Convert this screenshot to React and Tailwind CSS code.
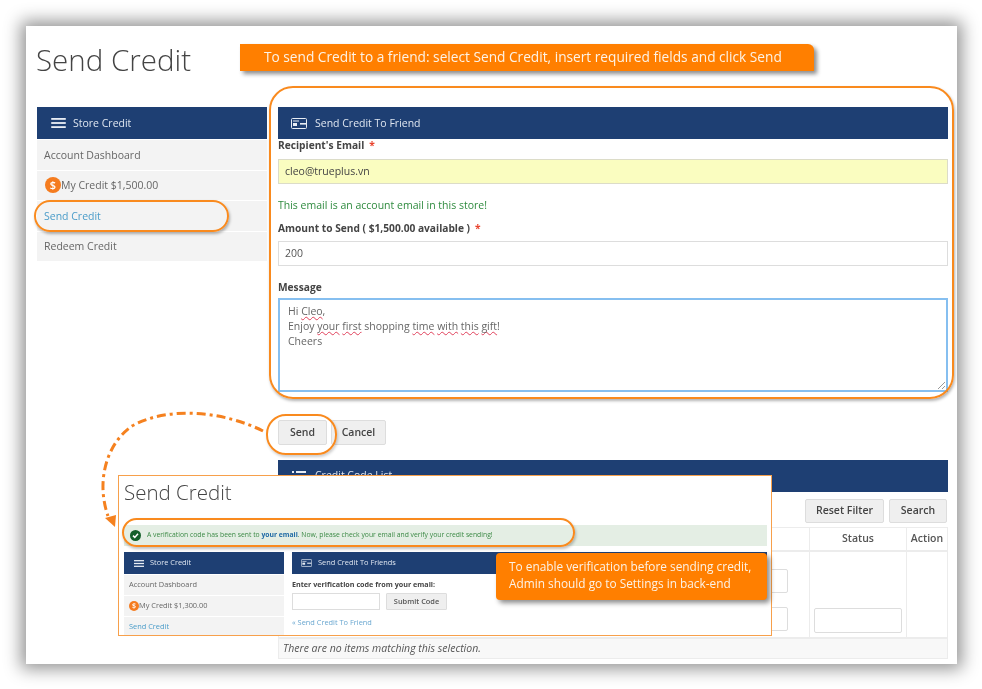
import React from "react";

const orange = "border-[#f98a1e]";

const MenuIcon = ({ className }) => (
  <svg className={className} viewBox="0 0 16 11" fill="#e8edf4">
    <rect x="0" y="0" width="16" height="2" />
    <rect x="0" y="4.5" width="16" height="2" />
    <rect x="0" y="9" width="16" height="2" />
  </svg>
);

const CardIcon = ({ className }) => (
  <svg className={className} viewBox="0 0 16 11" fill="none">
    <rect x="0.5" y="0.5" width="15" height="10" rx="1" stroke="#e8edf4" />
    <rect x="2" y="2.5" width="6" height="1" fill="#e8edf4" />
    <rect x="2" y="5" width="4" height="3" fill="#e8edf4" />
    <rect x="9" y="5" width="6" height="1.6" fill="#e8edf4" />
  </svg>
);

const ListIcon = ({ className }) => (
  <svg className={className} viewBox="0 0 14 11" fill="#e8edf4">
    <rect x="0" y="0" width="2" height="2" />
    <rect x="4" y="0" width="10" height="2" />
    <rect x="0" y="4.5" width="2" height="2" />
    <rect x="4" y="4.5" width="10" height="2" />
    <rect x="0" y="9" width="2" height="2" />
    <rect x="4" y="9" width="10" height="2" />
  </svg>
);

const Coin = ({ size }) => (
  <span className={`${size} rounded-full bg-[#f57c1f] text-white font-semibold flex items-center justify-center shrink-0`}>$</span>
);

const Wavy = ({ children }) => (
  <span className="underline decoration-wavy decoration-[#e0405a] decoration-1 underline-offset-1 [text-decoration-skip-ink:none]">{children}</span>
);

const Sidebar = () => (
  <div className="w-[230px] shrink-0 text-[10.5px] text-[#666]">
    <div className="h-8 bg-[#1e3f73] flex items-center pl-[14px] gap-[7px] text-[#dfe6f0]">
      <MenuIcon className="w-[15px] h-[10px]" />
      <span className="pt-[2px]">Store Credit</span>
    </div>
    <div className="flex flex-col gap-[1px] pt-[1px]">
      <div className="h-[29.5px] pt-[2px] bg-[#f3f3f3] flex items-center pl-[7px]">Account Dashboard</div>
      <div className="h-[29.5px] bg-[#f3f3f3] flex items-center pl-[8px]">
        <Coin size="w-[16px] h-[16px] text-[11px]" />
        <span className="pt-[2px]">My Credit $1,500.00</span>
      </div>
      <div className="h-[29.5px] pt-[2px] bg-[#f3f3f3] flex items-center pl-[7px] text-[#4a9cc9]">Send Credit</div>
      <div className="h-[29.5px] pt-[2px] bg-[#f3f3f3] flex items-center pl-[7px]">Redeem Credit</div>
    </div>
  </div>
);

const Label = ({ children, required, className }) => (
  <div className={`text-[10.2px] leading-[14px] font-bold text-[#444] ${className}`}>
    {children}
    {required && <span className="text-[#e8432e] ml-[5px]">*</span>}
  </div>
);

const Panel = () => (
  <div className="w-[670px] shrink-0 text-[10.5px] text-[#555]">
    <div className="h-8 bg-[#1e3f73] flex items-center pl-[13px] gap-[8px] text-[#dfe6f0]">
      <CardIcon className="w-[16px] h-[11px]" />
      <span className="pt-[2px]">Send Credit To Friend</span>
    </div>
    <Label required className="mt-[-1px]">Recipient's Email</Label>
    <div className="mt-[7px] h-[25px] bg-[#fafdc0] border border-[#dcdcc8] flex items-center pl-[6px] text-[#444]">cleo@trueplus.vn</div>
    <div className="mt-[14px] h-[14px] leading-[14px] text-[#2f8b3f]">This email is an account email in this store!</div>
    <Label required className="mt-[9px]">Amount to Send ( $1,500.00 available )</Label>
    <div className="mt-[6px] h-[25px] bg-white border border-[#dddddd] flex items-center pl-[6px]">200</div>
    <Label className="mt-[14px]">Message</Label>
    <div className="mt-[4px] h-[94px] bg-white border-2 border-[#86bff0] pl-[8px] pt-[4px] leading-[15px] text-[#666] relative">
      <div>Hi <Wavy>Cleo</Wavy>,</div>
      <div>Enjoy <Wavy>your</Wavy> <Wavy>first</Wavy> shopping <Wavy>time</Wavy> <Wavy>with</Wavy> <Wavy>this</Wavy> <Wavy>gift</Wavy>!</div>
      <div>Cheers</div>
      <svg className="absolute right-0 bottom-0 w-[9px] h-[9px]" viewBox="0 0 9 9" stroke="#999">
        <path d="M1 8 8 1M5 8 8 5" />
      </svg>
    </div>
    <div className="mt-[28px] flex gap-[4px] h-[25px] text-[#444] font-semibold">
      <div className="w-[49px] bg-[#efefef] border border-[#dddddd] rounded-[2px] flex items-center justify-center">Send</div>
      <div className="w-[55px] bg-[#efefef] border border-[#dddddd] rounded-[2px] flex items-center justify-center">Cancel</div>
    </div>
    <div className="mt-[15px] h-8 bg-[#1e3f73] flex items-center pl-[14px] gap-[9px] text-[#dfe6f0]">
      <ListIcon className="w-[14px] h-[11px]" />
      <span>Credit Code List</span>
    </div>
    <div className="mt-[7px] flex justify-end gap-[5px] h-[24px] pr-[1px] text-[#444] font-semibold">
      <div className="w-[79px] bg-[#efefef] border border-[#dddddd] rounded-[2px] flex items-center justify-center">Reset Filter</div>
      <div className="w-[58px] bg-[#efefef] border border-[#dddddd] rounded-[2px] flex items-center justify-center">Search</div>
    </div>
    <div className="mt-[4px] border border-[#ececec] grid grid-cols-[531px_97px_1fr] grid-rows-[24px_85px_21px] font-semibold text-[#555]">
      <div className="border-b-2 border-r border-[#ececec]" />
      <div className="border-b-2 border-r border-[#ececec] flex items-center justify-center">Status</div>
      <div className="border-b-2 border-[#ececec] flex items-center justify-center">Action</div>
      <div className="border-r border-[#ececec] flex flex-col items-end pr-[21px] pt-[17px] gap-[14px]">
        <div className="w-[40px] h-[24px] border border-[#dddddd] rounded-[2px] bg-white" />
        <div className="w-[40px] h-[24px] border border-[#dddddd] rounded-[2px] bg-white" />
      </div>
      <div className="border-r border-[#ececec] px-[4px] flex items-end pb-[4px]">
        <div className="w-full h-[25px] border border-[#dddddd] rounded-[2px] bg-white" />
      </div>
      <div />
      <div className="col-span-3 border-t-2 border-[#ececec] bg-[#f8f8f8] pl-[4px] flex items-center italic font-normal text-[#555]">
        There are no items matching this selection.
      </div>
    </div>
  </div>
);

const Inset = () => (
  <div className="absolute left-[118px] top-[475px] w-[654px] h-[161px] border border-[#f7a04b] bg-white overflow-hidden pl-[5px] pr-[4px]">
    <div className="pt-[2px] h-[32px] text-[20.5px] leading-[28px] font-light text-[#444]">Send Credit</div>
    <div className="mt-[17px] h-[21px] bg-[#e4eee4] flex items-center pl-[6px] gap-[6px] text-[6.8px] text-[#3c8a46]">
      <svg className="w-[11px] h-[11px]" viewBox="0 0 11 11">
        <circle cx="5.5" cy="5.5" r="5.5" fill="#14602a" />
        <path d="M3 5.6 4.8 7.4 8 3.8" stroke="#fff" strokeWidth="1.5" fill="none" />
      </svg>
      <span>A verification code has been sent to <b className="text-[#1f6aa5] font-bold">your email</b>. Now, please check your email and verify your credit sending!</span>
    </div>
    <div className="mt-[6px] flex gap-[8px]">
      <div className="w-[160px] shrink-0 text-[7.4px] text-[#666]">
        <div className="h-[22px] bg-[#1e3f73] flex items-center pl-[10px] gap-[6px] text-[#dfe6f0]">
          <MenuIcon className="w-[10px] h-[7px]" />
          <span>Store Credit</span>
        </div>
        <div className="flex flex-col gap-[1px] pt-[1px]">
          <div className="h-[20px] bg-[#f3f3f3] flex items-center pl-[5px]">Account Dashboard</div>
          <div className="h-[20px] bg-[#f3f3f3] flex items-center pl-[5px]">
            <Coin size="w-[10px] h-[10px] text-[7px]" />
            <span>My Credit $1,300.00</span>
          </div>
          <div className="h-[20px] bg-[#f3f3f3] flex items-center pl-[5px] text-[#4a9cc9]">Send Credit</div>
        </div>
      </div>
      <div className="flex-1 text-[7.4px] text-[#555]">
        <div className="h-[22px] bg-[#1e3f73] flex items-center pl-[9px] gap-[6px] text-[#dfe6f0]">
          <CardIcon className="w-[11px] h-[8px]" />
          <span>Send Credit To Friends</span>
        </div>
        <div className="mt-[5px] h-[10px] leading-[10px] font-bold text-[#444] text-[7.2px]">Enter verification code from your email:</div>
        <div className="mt-[4px] flex gap-[6px] h-[17px]">
          <div className="w-[88px] border border-[#dddddd] bg-white" />
          <div className="w-[61px] bg-[#efefef] border border-[#dddddd] rounded-[1px] flex items-center justify-center font-semibold">Submit Code</div>
        </div>
        <div className="mt-[7px] text-[#6aa7d0]">« Send Credit To Friend</div>
      </div>
    </div>
  </div>
);

const Arrow = () => (
  <svg className="absolute left-0 top-0 w-[982px] h-[689px] pointer-events-none" viewBox="0 0 982 689" fill="none">
    <path d="M263 431C225 412 170 405 132 426 106 444 96 482 108 516" stroke="#f5811f" strokeWidth="3" strokeDasharray="9 4 3 4" />
    <path d="M105 518 116 515 115 527Z" fill="#f5811f" />
  </svg>
);

const App = () => {
  return (
    <div className="relative w-[982px] h-[689px] overflow-hidden bg-white font-['Open_Sans',sans-serif] blur-[0.35px]">
      <div className="absolute left-[26px] top-[26px] w-[931px] h-[638px] shadow-[0_0_16px_5px_rgba(0,0,0,0.42)]" />
      <div className="relative ml-[26px] mt-[26px] pt-[14px] w-[931px] h-[638px] bg-white pl-[10px] overflow-hidden">
        <div className="h-[67px] text-[29.5px] leading-[40px] font-light text-[#444]">Send Credit</div>
        <div className="flex gap-[11px] ml-[1px]">
          <Sidebar />
          <Panel />
        </div>
      </div>

      {/* annotations lying over the screenshot */}
      <div className="absolute left-[240px] top-[44px] w-[574px] h-[27px] bg-[#ff7f00] rounded-tr-[6px] shadow-[3px_3px_4px_rgba(0,0,0,0.45)] pl-[24px] flex items-center text-[13.7px] text-[#fdf3e6]">
        To send Credit to a friend: select Send Credit, insert required fields and click Send
      </div>
      <div className={`absolute left-[269px] top-[86px] w-[685px] h-[313px] rounded-[24px] border-2 ${orange} shadow-[1px_2px_3px_rgba(0,0,0,0.3)]`} />
      <div className={`absolute left-[34px] top-[200px] w-[195px] h-[32px] rounded-[16px] border-2 ${orange} shadow-[1px_2px_3px_rgba(0,0,0,0.3)]`} />
      <div className={`absolute left-[266px] top-[414px] w-[71px] h-[41px] rounded-[20px] border-2 ${orange} shadow-[1px_2px_3px_rgba(0,0,0,0.2)]`} />
      <Arrow />
      <Inset />
      <div className={`absolute left-[122px] top-[518px] w-[453px] h-[29px] rounded-[15px] border-2 ${orange} shadow-[1px_2px_3px_rgba(0,0,0,0.25)]`} />
      <div className="absolute left-[496px] top-[553px] w-[271px] h-[47px] bg-[#ff7f00] rounded-[4px] shadow-[3px_3px_5px_rgba(0,0,0,0.45)] pl-[13px] pt-[5px] text-[11.85px] leading-[16.5px] text-[#fdf3e6]">
        <div>To enable verification before sending credit,</div>
        <div>Admin should go to Settings in back-end</div>
      </div>
    </div>
  );
};

export default App;
